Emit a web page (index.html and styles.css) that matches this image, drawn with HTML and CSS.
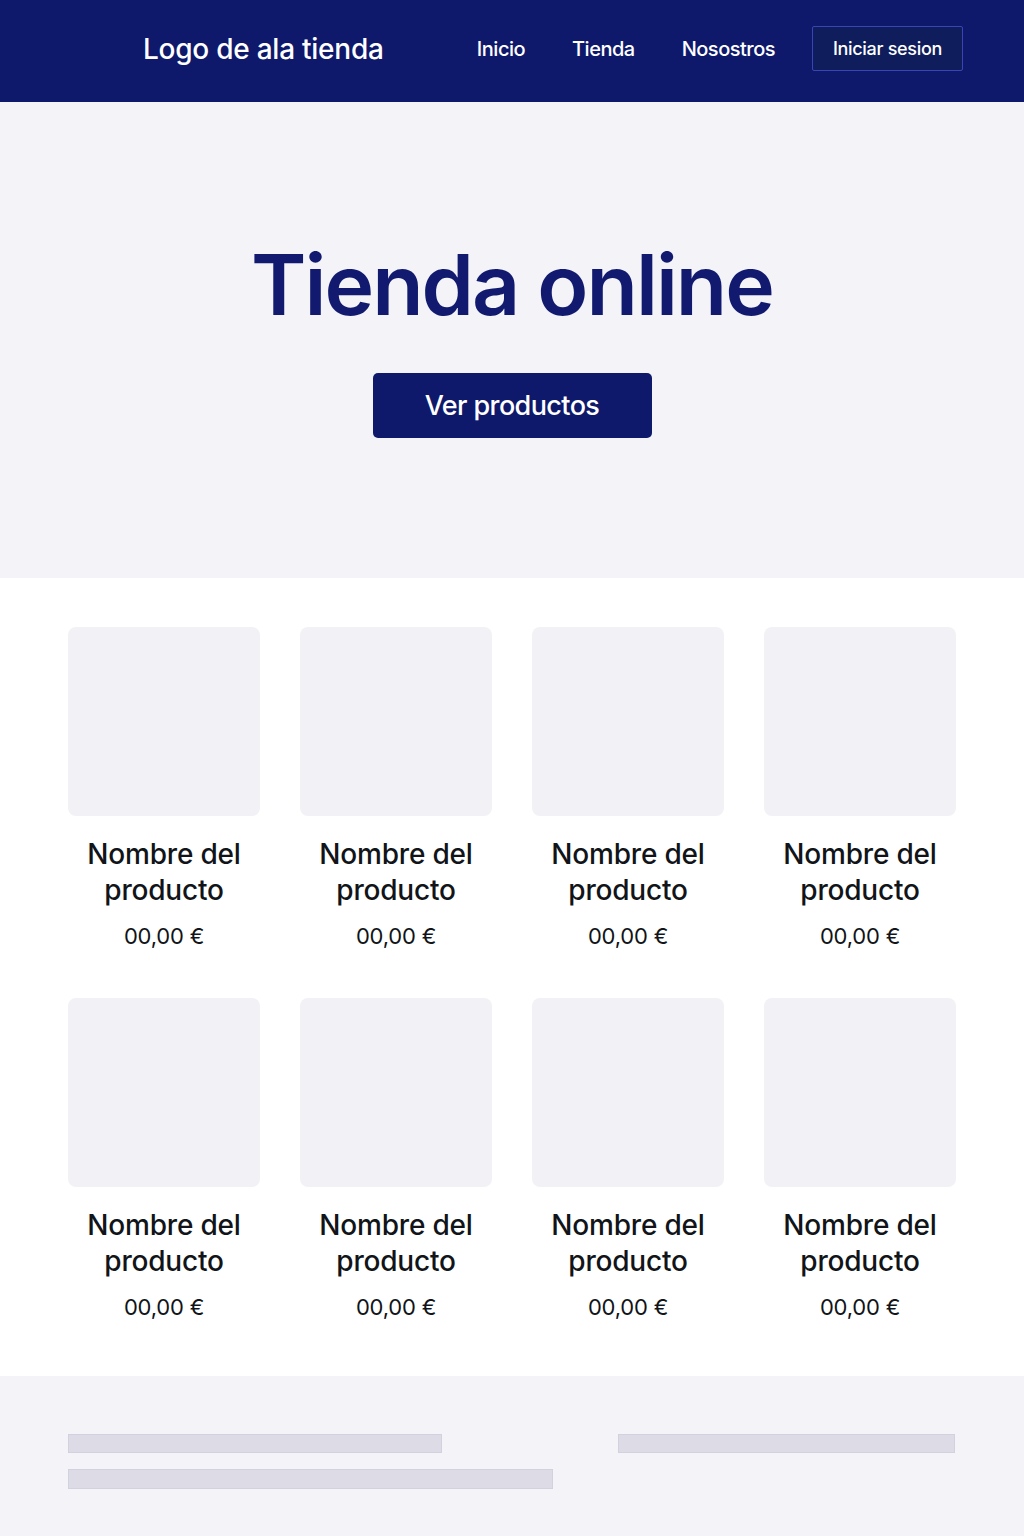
FILE: index.html
```html
<!DOCTYPE html>
<html lang="es">
<head>
<meta charset="utf-8">
<title>Tienda online</title>
<link rel="stylesheet" href="styles.css">
</head>
<body>
<header class="site-header">
  <div class="logo">Logo de ala tienda</div>
  <nav class="nav">
    <a class="nav-link" href="#">Inicio</a>
    <a class="nav-link" href="#">Tienda</a>
    <a class="nav-link" href="#">Nosostros</a>
    <a class="login-btn" href="#">Iniciar sesion</a>
  </nav>
</header>

<section class="hero">
  <h1 class="hero-title">Tienda online</h1>
  <a class="hero-btn" href="#">Ver productos</a>
</section>

<section class="products">
  <div class="grid">
    <div class="card"><div class="thumb"></div><h3 class="name">Nombre del<br>producto</h3><p class="price">00,00 €</p></div>
    <div class="card"><div class="thumb"></div><h3 class="name">Nombre del<br>producto</h3><p class="price">00,00 €</p></div>
    <div class="card"><div class="thumb"></div><h3 class="name">Nombre del<br>producto</h3><p class="price">00,00 €</p></div>
    <div class="card"><div class="thumb"></div><h3 class="name">Nombre del<br>producto</h3><p class="price">00,00 €</p></div>
    <div class="card"><div class="thumb"></div><h3 class="name">Nombre del<br>producto</h3><p class="price">00,00 €</p></div>
    <div class="card"><div class="thumb"></div><h3 class="name">Nombre del<br>producto</h3><p class="price">00,00 €</p></div>
    <div class="card"><div class="thumb"></div><h3 class="name">Nombre del<br>producto</h3><p class="price">00,00 €</p></div>
    <div class="card"><div class="thumb"></div><h3 class="name">Nombre del<br>producto</h3><p class="price">00,00 €</p></div>
  </div>
</section>

<footer class="site-footer">
  <div class="footer-col footer-left">
    <div class="bar bar-a"></div>
    <div class="bar bar-b"></div>
  </div>
  <div class="footer-col footer-right">
    <div class="bar bar-c"></div>
  </div>
</footer>
</body>
</html>
```

FILE: styles.css
```css
* { box-sizing: border-box; }

html, body {
  margin: 0;
  padding: 0;
  background: #ffffff;
  font-family: Inter, "Noto Sans", "Liberation Sans", sans-serif;
}

a { text-decoration: none; }

.site-header {
  height: 102px;
  background: #0f196b;
  display: flex;
  align-items: center;
  justify-content: space-between;
  padding: 0 61px 5px 143px;
}

.logo {
  color: #ffffff;
  font-size: 28px;
  font-weight: 500;
  letter-spacing: -0.25px;
}

.nav {
  display: flex;
  align-items: center;
}

.nav-link {
  color: #ffffff;
  font-size: 20px;
  font-weight: 500;
  letter-spacing: -0.5px;
  margin-right: 47px;
}

.nav-link:nth-child(3) { margin-right: 37px; }

.login-btn {
  color: #ffffff;
  font-size: 18px;
  font-weight: 500;
  letter-spacing: -0.3px;
  width: 151px;
  height: 45px;
  display: flex;
  align-items: center;
  justify-content: center;
  background: #0f1d5c;
  border: 1px solid #3a45b5;
  border-radius: 2px;
}

.hero {
  background: #f3f3f8;
  height: 476px;
  display: flex;
  flex-direction: column;
  align-items: center;
  padding-top: 141px;
}

.hero-title {
  margin: 0;
  color: #111a6e;
  font-size: 84px;
  line-height: 1;
  font-weight: 600;
  letter-spacing: -2px;
}

.hero-btn {
  margin-top: 46px;
  width: 279px;
  height: 65px;
  background: #0f196b;
  color: #ffffff;
  border-radius: 5px;
  display: flex;
  align-items: center;
  justify-content: center;
  font-size: 27px;
  font-weight: 500;
  letter-spacing: -0.6px;
}

.products {
  padding: 49px 68px 24px 68px;
  height: 798px;
}

.grid {
  display: grid;
  grid-template-columns: repeat(4, 192px);
  column-gap: 40px;
  row-gap: 48px;
}

.card {
  display: flex;
  flex-direction: column;
  align-items: center;
}

.thumb {
  width: 192px;
  height: 189px;
  background: #f2f2f6;
  border-radius: 8px;
}

.name {
  margin: 20px 0 0 0;
  font-size: 28px;
  line-height: 36px;
  font-weight: 500;
  color: #111418;
  text-align: center;
  letter-spacing: -0.2px;
}

.price {
  margin: 14px 0 0 0;
  font-size: 22px;
  line-height: 28px;
  font-weight: 400;
  color: #111418;
  letter-spacing: -0.2px;
}

.site-footer {
  background: #f3f3f8;
  height: 160px;
  display: flex;
  padding: 58px 69px 0 68px;
  justify-content: space-between;
}

.footer-col {
  display: flex;
  flex-direction: column;
  gap: 16px;
}

.bar {
  background: #dcdbe6;
  border: 1px solid #d2d1df;
}

.bar-a { width: 374px; height: 19px; }
.bar-b { width: 485px; height: 20px; }
.bar-c { width: 337px; height: 19px; }
```
